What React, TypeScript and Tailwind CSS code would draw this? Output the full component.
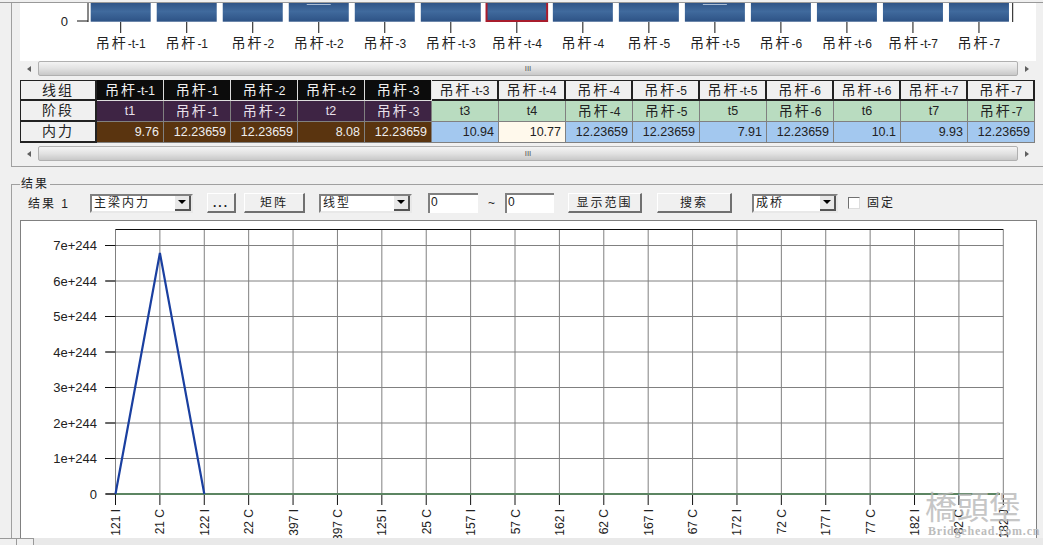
import React from "react";

const names = ["吊杆-t-1","吊杆-1","吊杆-2","吊杆-t-2","吊杆-3","吊杆-t-3","吊杆-t-4","吊杆-4","吊杆-5","吊杆-t-5","吊杆-6","吊杆-t-6","吊杆-t-7","吊杆-7"];
const stages = ["t1","吊杆-1","吊杆-2","t2","吊杆-3","t3","t4","吊杆-4","吊杆-5","t5","吊杆-6","t6","t7","吊杆-7"];
const forces = ["9.76","12.23659","12.23659","8.08","12.23659","10.94","10.77","12.23659","12.23659","7.91","12.23659","10.1","9.93","12.23659"];
const xLabels = ["121 I","21 C","122 I","22 C","397 I","397 C","125 I","25 C","157 I","57 C","162 I","62 C","167 I","67 C","172 I","72 C","177 I","77 C","182 I","82 C","182 J"];
const yLabels = ["7e+244","6e+244","5e+244","4e+244","3e+244","2e+244","1e+244","0"];
const FONT = '"Liberation Sans","Noto Sans CJK SC",sans-serif';

function Label({ text }: { text: string }) {
  if (!text.startsWith("吊杆")) return <span className="text-[12.5px]">{text}</span>;
  return (
    <span className="whitespace-nowrap">
      <span className="text-[14px] tracking-[2px]">{text.slice(0, 2)}</span>
      <span className="text-[12px]">{text.slice(2)}</span>
    </span>
  );
}

function HScroll() {
  return (
    <div className="flex h-[15px] w-[1015px] items-center bg-[#f0f0f0]">
      <div className="flex w-[18px] justify-center">
        <div className="h-0 w-0 border-y-[3px] border-r-[4px] border-y-transparent border-r-[#606060]" />
      </div>
      <div className="flex h-[15px] flex-1 items-center justify-center rounded-[2px] border border-[#b0b0b0] bg-gradient-to-b from-[#f4f4f4] via-[#e2e2e2] to-[#c8c8c8]">
        <span className="text-[8px] leading-none text-[#555]">III</span>
      </div>
      <div className="flex w-[17px] justify-center">
        <div className="h-0 w-0 border-y-[3px] border-l-[4px] border-y-transparent border-l-[#606060]" />
      </div>
    </div>
  );
}

function HeadCell({ text, first }: { text: string; first?: boolean }) {
  return (
    <div className={`flex items-center justify-center border-l border-r-2 border-b-2 border-[#222] bg-[#f0f0f0] text-[14px] tracking-[2px] text-[#222] ${first ? "border-t" : ""}`}>
      {text}
    </div>
  );
}

function Select({ text, w }: { text: string; w: string }) {
  return (
    <div className={`flex h-[19px] items-center justify-between border-2 border-t-[#808080] border-l-[#808080] border-r-[#e8e8e8] border-b-[#e8e8e8] bg-white pl-[2px] text-[12px] tracking-[2px] text-[#222] ${w}`}>
      <span>{text}</span>
      <div className="flex h-[15px] w-[16px] items-center justify-center border-r-2 border-b-2 border-r-[#555] border-b-[#555] bg-[#e8e8e8]">
        <div className="h-0 w-0 border-x-[4px] border-t-[4px] border-x-transparent border-t-black" />
      </div>
    </div>
  );
}

function Btn({ text, w }: { text: string; w: string }) {
  return (
    <div className={`flex h-[20px] items-center justify-center border-t border-l border-t-white border-l-white border-r-2 border-b-2 border-r-[#707070] border-b-[#707070] bg-[#f0f0f0] text-[12px] tracking-[2px] text-[#222] ${w}`}>
      {text}
    </div>
  );
}

function Input({ w }: { w: string }) {
  return (
    <div className={`h-[20px] border-t-2 border-l-2 border-t-[#808080] border-l-[#808080] bg-white pl-[1px] text-[12px] leading-[15px] text-[#222] ${w}`}>
      0
    </div>
  );
}

function BarChart() {
  const step = 66.02;
  return (
    <svg width="1016" height="58" className="block">
      <defs>
        <linearGradient id="bar" x1="0" y1="0" x2="0" y2="1">
          <stop offset="0" stopColor="#2f5487" />
          <stop offset="0.45" stopColor="#406a9d" />
          <stop offset="1" stopColor="#2d5285" />
        </linearGradient>
      </defs>
      <line x1="68" y1="0" x2="68" y2="19" stroke="#111" />
      <line x1="57" y1="18" x2="68" y2="18" stroke="#111" />
      <line x1="992.7" y1="0" x2="992.7" y2="19" stroke="#111" />
      <text x="48" y="23" fontSize="13" fontFamily={FONT} fill="#222" textAnchor="end">0</text>
      {names.map((n, i) => {
        const x = 70.7 + step * i;
        const cx = x + 30;
        return (
          <g key={i}>
            <rect x={x} y="0" width="60" height="18.7" fill="url(#bar)" />
            {i === 6 && <rect x={x - 0.3} y="-2" width="60.6" height="20" fill="none" stroke="#a81c2c" strokeWidth="2" />}
            {(i === 3 || i === 9) && <line x1={x + 18} y1="1.5" x2={x + 42} y2="1.5" stroke="#a9bdd6" />}
            <line x1={cx} y1="19" x2={cx} y2="30" stroke="#111" />
            <text x={cx} y="45" textAnchor="middle" fontFamily={FONT} fill="#222">
              <tspan fontSize="14" letterSpacing="2">{n.slice(0, 2)}</tspan>
              <tspan fontSize="12">{n.slice(2)}</tspan>
            </text>
          </g>
        );
      })}
    </svg>
  );
}

function LineChart() {
  const xs = xLabels.map((_, i) => 94.5 + i * 44.39);
  const ys = yLabels.map((_, i) => 24.5 + i * 35.5);
  const base = 273;
  return (
    <svg width="1015" height="317" className="block">
      {xs.map((x, i) => (
        <g key={i}>
          <line x1={x} y1="8.5" x2={x} y2={base} stroke="#808080" />
          <line x1={x} y1={base} x2={x} y2={base + 11} stroke="#111" />
          <text transform={`translate(${x + 4.5},288) rotate(-90)`} textAnchor="end" fontSize="12" fontFamily={FONT} fill="#222">{xLabels[i]}</text>
        </g>
      ))}
      {ys.map((y, i) => (
        <g key={i}>
          <line x1="85" y1={y} x2={i === 7 ? 94.5 : 982.3} y2={y} stroke={i === 7 ? "#111" : "#808080"} />
          <line x1="84" y1={y} x2="94.5" y2={y} stroke="#111" />
          <text x="76" y={y + 4.5} textAnchor="end" fontSize="13" fontFamily={FONT} fill="#222">{yLabels[i]}</text>
        </g>
      ))}
      <line x1="94.5" y1="8.5" x2="982.3" y2="8.5" stroke="#111" />
      <line x1="94.5" y1={base} x2="979" y2={base} stroke="#5c8562" strokeWidth="2" />
      <polyline points={`94.5,${base} 138.9,32 183.3,${base}`} fill="none" stroke="#1a3fa0" strokeWidth="2.2" />
    </svg>
  );
}

export default function App() {
  return (
    <div className="relative flex h-[545px] w-[1043px] flex-col overflow-hidden bg-[#f0f0f0]" style={{ fontFamily: FONT }}>
      <div className="h-[3px] w-full border-b border-[#999]" />
      <div className="ml-[11px] h-[164px] border-b border-l border-[#a0a0a0] pl-[8px]">
        <div className="w-[1016px] bg-white">
          <BarChart />
        </div>
        <HScroll />
        <div className="mt-[4px] grid h-[63px] w-[1015px] grid-cols-[77px_repeat(14,67px)] grid-rows-3">
          <HeadCell text="线组" first />
          {names.map((n, i) => (
            <div key={i} className={`flex items-center justify-center ${i < 5 ? "border-r border-b border-[#ddd] bg-[#0c0c0c] text-[#f0f0f0]" : "border-t border-r-2 border-b-2 border-[#222] bg-[#f0f0f0] text-[#222]"}`}>
              <Label text={n} />
            </div>
          ))}
          <HeadCell text="阶段" />
          {stages.map((n, i) => (
            <div key={i} className={`flex items-center justify-center border-r border-b border-[#808080] ${i < 5 ? "bg-[#3e2444] text-[#e8e0ea]" : "bg-[#b9dcc0] text-[#222]"}`}>
              <Label text={n} />
            </div>
          ))}
          <HeadCell text="内力" />
          {forces.map((n, i) => (
            <div key={i} className={`flex items-center justify-end border-r border-b border-[#808080] pr-[4px] text-[12.5px] ${i < 5 ? "bg-[#5a340f] text-[#eee]" : i === 6 ? "bg-[#fff9ec] text-[#222]" : "bg-[#a3c8ef] text-[#222]"}`}>
              {n}
            </div>
          ))}
        </div>
        <div className="mt-[3px]">
          <HScroll />
        </div>
      </div>

      <div className="relative ml-[11px] mt-[17px] flex-1 border-t border-l border-[#a0a0a0] pl-[8px]">
        <span className="absolute left-[8px] top-[-8px] bg-[#f0f0f0] px-[1px] text-[12px] leading-[14px] tracking-[2px] text-[#222]">结果</span>
        <div className="flex h-[35px] items-center pt-[1px]">
          <span className="ml-[8px] w-[62px] pt-[2px] text-[12px] tracking-[2px] text-[#222]">结果 1</span>
          <Select text="主梁内力" w="w-[103px]" />
          <div className="ml-[14px]"><Btn text="..." w="w-[29px] font-bold" /></div>
          <div className="ml-[8px]"><Btn text="矩阵" w="w-[61px]" /></div>
          <div className="ml-[14px]"><Select text="线型" w="w-[93px]" /></div>
          <div className="ml-[16px]"><Input w="w-[50px]" /></div>
          <span className="mx-[8px] w-[11px] text-center text-[12px] text-[#222]">~</span>
          <Input w="w-[49px]" />
          <div className="ml-[14px]"><Btn text="显示范围" w="w-[74px]" /></div>
          <div className="ml-[15px]"><Btn text="搜索" w="w-[75px]" /></div>
          <div className="ml-[20px]"><Select text="成桥" w="w-[86px]" /></div>
          <div className="ml-[10px] h-[12px] w-[12px] border border-t-[#707070] border-l-[#707070] border-r-[#ddd] border-b-[#ddd] bg-white" />
          <span className="ml-[7px] text-[12px] tracking-[2px] text-[#222]">固定</span>
        </div>
        <div className="h-[318px] w-[1017px] border-t border-l border-r border-[#808080] bg-white">
          <LineChart />
        </div>
      </div>

      <div className="flex h-[7px] items-start bg-[#e9e9e9]">
        <div className="h-[7px] w-[17px] border-r border-t border-[#999] bg-[#f0f0f0]" />
        <div className="h-[7px] w-[17px] border-r border-t border-[#999] bg-[#f0f0f0]" />
      </div>

      <div className="absolute left-[925px] top-[486px] flex flex-col items-start">
        <span className="text-[32px] leading-[38px] text-[#b8b8b8] opacity-80" style={{ fontFamily: '"Noto Sans CJK TC",serif' }}>橋頭堡</span>
        <span className="ml-[3px] mt-[1px] text-[12px] font-bold leading-[12px] tracking-[0.8px] text-[#bcbcbc]" style={{ fontFamily: '"Liberation Serif",serif' }}>Bridgehead.com.cn</span>
      </div>
    </div>
  );
}
